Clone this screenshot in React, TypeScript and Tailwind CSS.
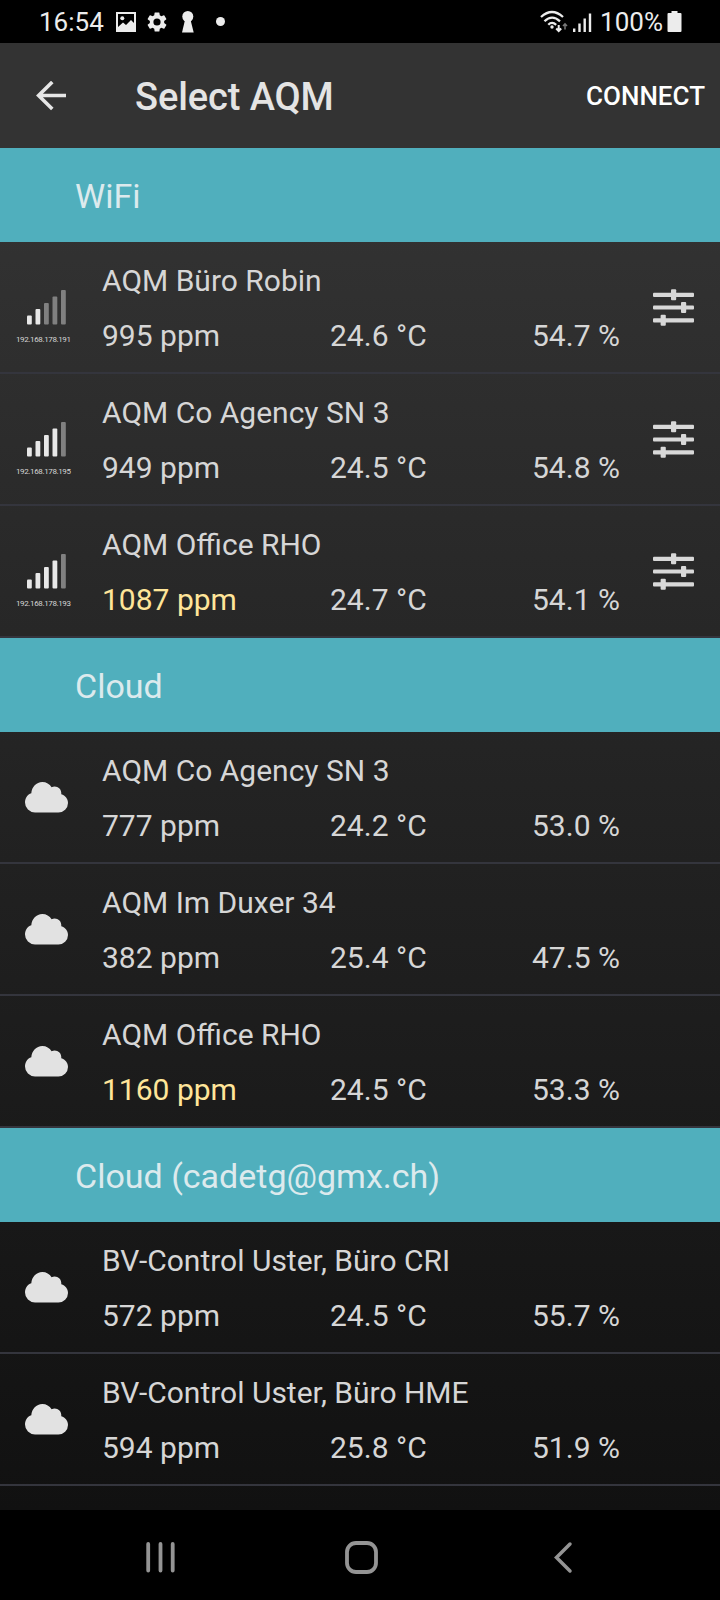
import React from 'react';

interface Device {
  name: string;
  co2: number;
  temperature: string;
  humidity: string;
  ip?: string;
  signal?: number;
}

interface Section {
  title: string;
  devices: Device[];
}

const sections: Section[] = [
  {
    title: 'WiFi',
    devices: [
      { name: 'AQM Büro Robin', co2: 995, temperature: '24.6', humidity: '54.7', ip: '192.168.178.191', signal: 2 },
      { name: 'AQM Co Agency SN 3', co2: 949, temperature: '24.5', humidity: '54.8', ip: '192.168.178.195', signal: 4 },
      { name: 'AQM Office RHO', co2: 1087, temperature: '24.7', humidity: '54.1', ip: '192.168.178.193', signal: 4 },
    ],
  },
  {
    title: 'Cloud',
    devices: [
      { name: 'AQM Co Agency SN 3', co2: 777, temperature: '24.2', humidity: '53.0' },
      { name: 'AQM Im Duxer 34', co2: 382, temperature: '25.4', humidity: '47.5' },
      { name: 'AQM Office RHO', co2: 1160, temperature: '24.5', humidity: '53.3' },
    ],
  },
  {
    title: 'Cloud (cadetg@gmx.ch)',
    devices: [
      { name: 'BV-Control Uster, Büro CRI', co2: 572, temperature: '24.5', humidity: '55.7' },
      { name: 'BV-Control Uster, Büro HME', co2: 594, temperature: '25.8', humidity: '51.9' },
    ],
  },
];

const StatusBar: React.FC = () => (
  <div className="flex h-[43px] shrink-0 items-center bg-black pl-[39px] pr-[38px] text-[26px] leading-[43px] text-[#ececec]">
    <span className="w-[77px] pt-px">16:54</span>
    <svg className="h-[20px] w-[20px]" viewBox="0 0 20 20" fill="currentColor">
      <path fillRule="evenodd" d="M0 0H20V20H0ZM2 2V15L7 10.5L10 13L15 8L18 11V2Z" />
      <circle cx="6.3" cy="6.3" r="2" />
    </svg>
    <svg className="ml-[9px] h-[24px] w-[24px]" viewBox="0 0 24 24" fill="currentColor">
      <path d="M19.14 12.94c.04-.3.06-.61.06-.94s-.02-.64-.07-.94l2.03-1.58a.49.49 0 0 0 .12-.61l-1.92-3.32a.49.49 0 0 0-.59-.22l-2.39.96a7 7 0 0 0-1.62-.94l-.36-2.54a.48.48 0 0 0-.48-.41h-3.84a.48.48 0 0 0-.47.41l-.36 2.54a7.4 7.4 0 0 0-1.62.94l-2.39-.96a.48.48 0 0 0-.59.22L2.74 8.87a.48.48 0 0 0 .12.61l2.03 1.58a6 6 0 0 0 0 1.88l-2.03 1.58a.49.49 0 0 0-.12.61l1.92 3.32c.12.22.37.29.59.22l2.39-.96c.5.38 1.03.7 1.62.94l.36 2.54c.05.24.24.41.48.41h3.84c.24 0 .44-.17.47-.41l.36-2.54a7.4 7.4 0 0 0 1.62-.94l2.39.96c.22.08.47 0 .59-.22l1.92-3.32a.48.48 0 0 0-.12-.61zM12 15.6a3.6 3.6 0 1 1 0-7.2 3.6 3.6 0 0 1 0 7.2z" />
    </svg>
    <svg className="ml-[12px] h-[22px] w-[14px]" viewBox="0 0 14 22" fill="currentColor">
      <circle cx="6.8" cy="5.5" r="5.5" />
      <path d="M4 9H9.6L12.7 21.5H1Z" />
    </svg>
    <div className="ml-[21px] h-[9px] w-[9px] rounded-full bg-current" />
    <svg className="ml-auto h-[24px] w-[52px]" viewBox="0 0 52 24" fill="none" stroke="currentColor">
      <path d="M1 7Q12-3 23 7M4.5 11.3Q12 4 20 11.3M8.3 14.8Q12 11 16.2 14.8" strokeWidth="2.3" />
      <circle cx="12" cy="17" r="1.7" fill="currentColor" stroke="none" />
      <path d="M18.7 15V20M16.2 18.5L18.7 21L21.2 18.5" strokeWidth="2" />
      <path d="M25 19.5V14.5M23 16L25 13.8L27 16" stroke="#777" strokeWidth="1.5" />
      <path d="M34.2 22V18.5M39.5 22V13.5M44.7 22V8.5M50 22V3.5" strokeWidth="2.4" />
    </svg>
    <span className="ml-[8px] pt-px">100%</span>
    <svg className="ml-1 h-[21px] w-[15px]" viewBox="0 0 15 21" fill="currentColor">
      <path d="M4.5 0H10.5V2H13.5Q14.5 2 14.5 3V20Q14.5 21 13.5 21H1.5Q.5 21 .5 20V3Q.5 2 1.5 2H4.5Z" />
    </svg>
  </div>
);

const AppBar: React.FC = () => (
  <header className="flex h-[105px] shrink-0 items-center bg-[#333333] pl-9 pr-[15px]">
    <button type="button" aria-label="Back">
      <svg className="block h-[30px] w-[31px]" viewBox="0 0 31 30" fill="none" stroke="#e6e6e6" strokeWidth="3.6">
        <path d="M30 14.5H3M16.3 1L2.6 14.5L16.3 28" />
      </svg>
    </button>
    <h1 className="ml-[68px] pt-[3px] text-[38px] font-medium tracking-[-0.1px] text-[#e4e4e4]">Select AQM</h1>
    <button type="button" className="ml-auto pt-[2px] text-[26px] font-medium text-white">CONNECT</button>
  </header>
);

const bars = [
  { x: 0, y: 25.5 },
  { x: 8.5, y: 19 },
  { x: 17, y: 13 },
  { x: 25.5, y: 6.5 },
  { x: 34, y: 0 },
];

const SignalIcon: React.FC<{ level: number }> = ({ level }) => (
  <svg className="h-[35px] w-[39px]" viewBox="0 0 39 35">
    {bars.map((bar, index) => (
      <rect key={index} x={bar.x} y={bar.y} width="4.8" height={34.5 - bar.y} rx="1" fill={index < level ? '#e8e8e8' : '#808080'} />
    ))}
  </svg>
);

const CloudIcon: React.FC = () => (
  <svg className="h-[31px] w-[43px]" viewBox="0 0 43 31" fill="#e2e2e2">
    <path d="M10 30.5A10 10 0 0 1 0 20.5C0 16 2.5 12.5 6.3 11.2C6.800 5 11.3 0 17.3 0C21.3 0 24.6 2 26.6 5.3C31 3.2 36.8 6 36.3 12.3C40.3 13.5 43 17 43 21A9.6 9.6 0 0 1 33.4 30.5Z" />
  </svg>
);

const SlidersIcon: React.FC = () => (
  <svg className="h-[37px] w-[41px]" viewBox="0 0 41 37" fill="#d8d8d8">
    <rect y="3.7" width="41" height="4.2" rx="1" />
    <rect x="18" y="0.3" width="5.2" height="11" rx="1" />
    <rect y="16.4" width="41" height="4.2" rx="1" />
    <rect x="28" y="13" width="5.2" height="11" rx="1" />
    <rect y="29.2" width="41" height="4.2" rx="1" />
    <rect x="7.6" y="25.8" width="5.2" height="11" rx="1" />
  </svg>
);

const DeviceRow: React.FC<{ device: Device }> = ({ device }) => (
  <li className="flex h-[132px] border-b-2 border-[#34353d] text-[30px] leading-[55px] text-[#d6d6d6]">
    {device.signal ? (
      <div className="flex w-[102px] flex-col items-start pl-[16px] pt-[48px]">
        <div className="h-[35px] pl-[11px] leading-none">
          <SignalIcon level={device.signal} />
        </div>
        <span className="mt-[10px] text-[8px] leading-[10px] tracking-[-0.38px]">{device.ip}</span>
      </div>
    ) : (
      <div className="w-[102px] pl-[25px] pt-[50px]">
        <CloudIcon />
      </div>
    )}
    <div className="w-[551px] pt-[11px]">
      <div>{device.name}</div>
      <div className="flex">
        <span className={device.co2 > 1000 ? 'w-[228px] text-[#ffe599]' : 'w-[228px]'}>{device.co2} ppm</span>
        <span className="w-[202px]">{device.temperature} °C</span>
        <span>{device.humidity} %</span>
      </div>
    </div>
    {device.ip && (
      <button type="button" aria-label="Settings" className="self-start pt-[47px]">
        <SlidersIcon />
      </button>
    )}
  </li>
);

const NavBar: React.FC = () => (
  <nav className="flex h-[90px] shrink-0 items-start bg-black pl-[145px] pt-[30px]">
    <svg className="h-[34px] w-[32px]" viewBox="0 0 32 34" fill="none" stroke="#949494" strokeWidth="3.8" strokeLinecap="round">
      <path d="M3.2 4V30.5M15.5 4V30.5M27.7 4V30.5" />
    </svg>
    <svg className="ml-[168px] h-[34px] w-[34px]" viewBox="0 0 34 34" fill="none" stroke="#949494" strokeWidth="3.8">
      <rect x="2" y="3" width="29" height="29" rx="9" />
    </svg>
    <svg className="ml-[174px] h-[34px] w-[20px]" viewBox="0 0 20 34" fill="none" stroke="#949494" strokeWidth="3.5" strokeLinecap="round">
      <path d="M17 4L3.5 17.5L17 31" />
    </svg>
  </nav>
);

const App: React.FC = () => {
  return (
    <div className="flex h-[1600px] w-[720px] flex-col overflow-hidden bg-black font-['Roboto',sans-serif]">
      <StatusBar />
      <AppBar />
      <main className="h-[1362px] shrink-0 bg-linear-to-b from-[#343434] to-[#111111]">
        {sections.map((section) => (
          <section key={section.title}>
            <h2 className="flex h-[94px] items-center bg-[#50afbd] pl-[75px] pt-[3px] text-[34px] text-[#dceaed]">
              {section.title}
            </h2>
            <ul>
              {section.devices.map((device) => (
                <DeviceRow key={device.name} device={device} />
              ))}
            </ul>
          </section>
        ))}
      </main>
      <NavBar />
    </div>
  );
};

export default App;
